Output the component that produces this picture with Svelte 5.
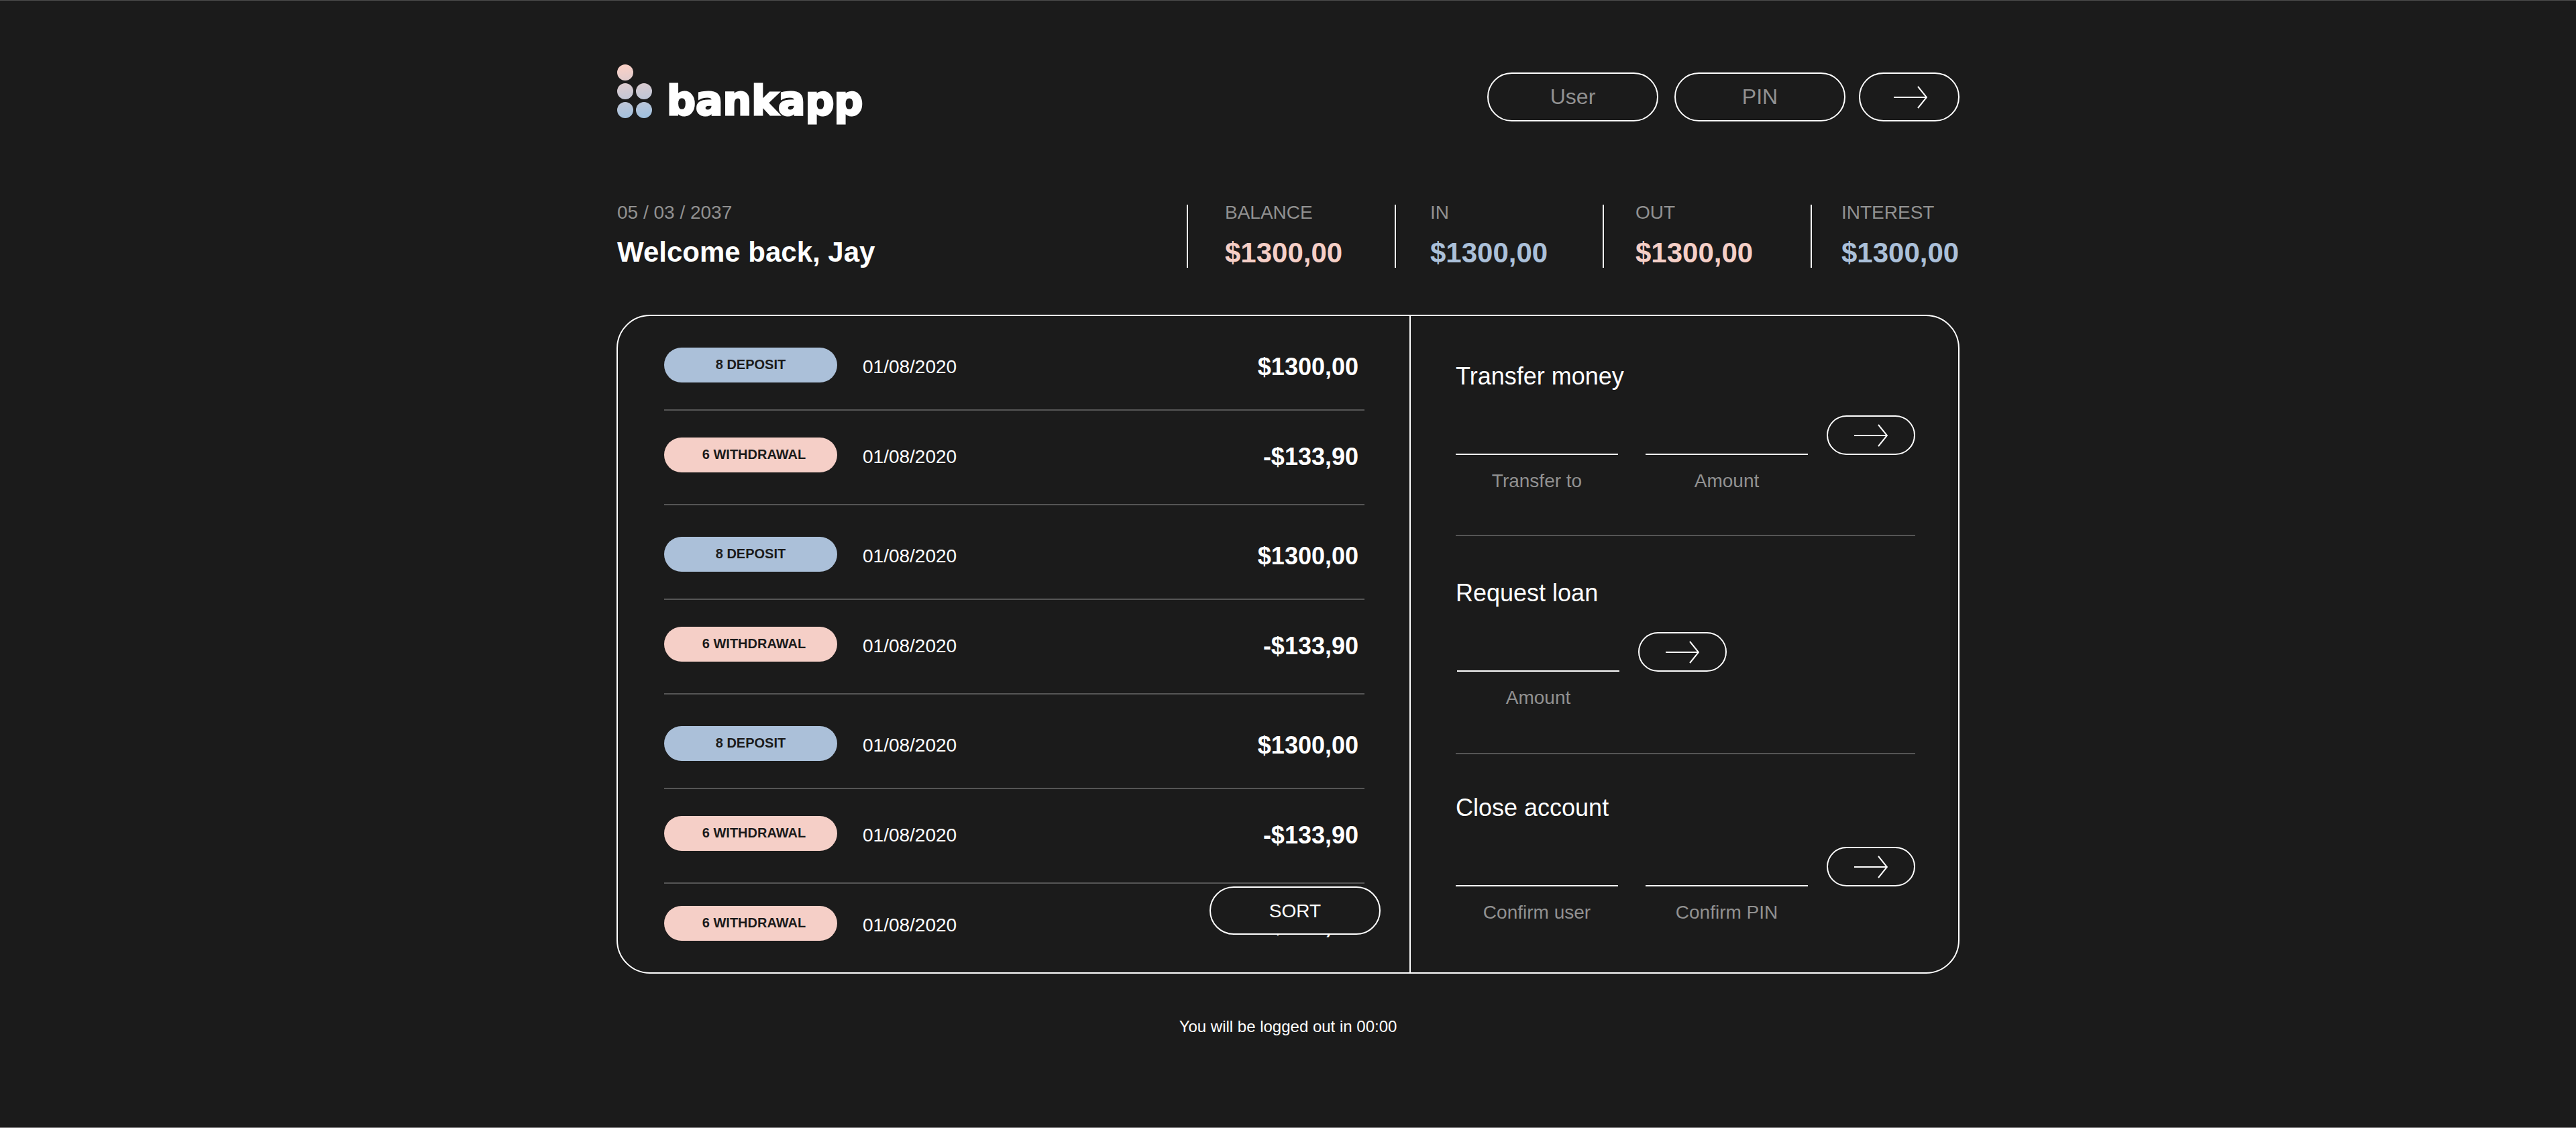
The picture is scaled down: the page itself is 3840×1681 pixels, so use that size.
<script>
  const stats = [
    { label: 'BALANCE', value: '$1300,00', tone: 'pink' },
    { label: 'IN', value: '$1300,00', tone: 'blue' },
    { label: 'OUT', value: '$1300,00', tone: 'pink' },
    { label: 'INTEREST', value: '$1300,00', tone: 'blue' }
  ];

  const deposit = { type: 'deposit', tag: '8 DEPOSIT', date: '01/08/2020', amount: '$1300,00' };
  const withdrawal = { type: 'withdrawal', tag: '6 WITHDRAWAL', date: '01/08/2020', amount: '-$133,90' };
  const movements = [deposit, withdrawal, deposit, withdrawal, deposit, withdrawal, withdrawal];

  const operations = [
    { id: 'transfer', title: 'Transfer money', fields: ['Transfer to', 'Amount'] },
    { id: 'loan', title: 'Request loan', fields: ['Amount'] },
    { id: 'close', title: 'Close account', fields: ['Confirm user', 'Confirm PIN'] }
  ];
</script>

{#snippet arrow()}
  <svg class="arrow" viewBox="0 0 50 34" aria-hidden="true">
    <path d="M0 17H49M36 1L49 17L36 33" />
  </svg>
{/snippet}

<div class="page">
  <div class="wrap">
    <header>
      <div class="brand">
        <svg class="dots" viewBox="0 0 52 80" aria-hidden="true">
          <defs>
            <linearGradient id="dots" gradientUnits="userSpaceOnUse" x1="20" y1="0" x2="32" y2="80">
              <stop offset="0" stop-color="#fad0c6" />
              <stop offset="1" stop-color="#a1c1df" />
            </linearGradient>
          </defs>
          <g fill="url(#dots)">
            <circle cx="12" cy="12" r="12" />
            <circle cx="12" cy="40" r="12" />
            <circle cx="40" cy="40" r="12" />
            <circle cx="12" cy="68" r="12" />
            <circle cx="40" cy="68" r="12" />
          </g>
        </svg>
        <span class="wordmark">bankapp</span>
      </div>
      <form class="login">
        <input class="pill" type="text" placeholder="User" aria-label="User" />
        <input class="pill" type="text" placeholder="PIN" aria-label="PIN" />
        <button class="go big" type="button" aria-label="Log in">{@render arrow()}</button>
      </form>
    </header>

    <section class="summary">
      <div class="welcome">
        <p class="caption">05 / 03 / 2037</p>
        <h1>Welcome back, Jay</h1>
      </div>
      <dl class="stats">
        {#each stats as s}
          <div class="stat">
            <dt class="caption">{s.label}</dt>
            <dd class={s.tone}>{s.value}</dd>
          </div>
        {/each}
      </dl>
    </section>

    <main class="panel">
      <section class="movements">
        <ul>
          {#each movements as m}
            <li class={m.type}>
              <span class="tag">{m.tag}</span>
              <time>{m.date}</time>
              <strong>{m.amount}</strong>
            </li>
          {/each}
        </ul>
        <button class="sort" type="button">SORT</button>
      </section>

      <div class="operations">
        {#each operations as op}
          <form class="operation {op.id}">
            <h2>{op.title}</h2>
            <div class="fields">
              {#each op.fields as f, i}
                <div class="field">
                  <input id="{op.id}-{i}" type="text" />
                  <label for="{op.id}-{i}">{f}</label>
                </div>
              {/each}
              <button class="go" type="button" aria-label={op.title}>{@render arrow()}</button>
            </div>
          </form>
        {/each}
      </div>
    </main>

    <footer>You will be logged out in 00:00</footer>
  </div>
</div>

<style>
  :global(body) {
    background: #1b1b1b;
  }

  .page,
  .page * {
    box-sizing: border-box;
  }

  .page {
    min-height: 100vh;
    padding: 95px 24px 0;
    border-top: 1px solid #4c4c4c;
    border-bottom: 1px solid #8a8788;
    background: #1b1b1b;
    color: #fff;
    font-family: 'Liberation Sans', Arial, sans-serif;
    font-size: 28px;
  }

  .wrap {
    max-width: 2002px;
    margin: 0 auto;
  }

  h1,
  h2,
  p,
  ul,
  dl,
  dd {
    margin: 0;
    padding: 0;
  }

  input,
  button {
    margin: 0;
    padding: 0;
    border: 2px solid #fff;
    border-radius: 0;
    background: #1b1b1b;
    color: #fff;
    font: inherit;
    text-align: center;
  }

  header {
    display: flex;
    justify-content: space-between;
    align-items: flex-start;
  }

  .brand {
    display: flex;
    gap: 22px;
    padding-left: 1px;
  }

  .dots {
    width: 52px;
    height: 80px;
  }

  .wordmark {
    padding-top: 24px;
    font-family: 'DejaVu Sans', Verdana, sans-serif;
    font-size: 60px;
    font-weight: 700;
    line-height: 60px;
    -webkit-text-stroke: 3px #fff;
  }

  .login {
    display: flex;
    gap: 24px;
    padding-top: 12px;
  }

  .pill {
    width: 255px;
    height: 73px;
    border-radius: 37px;
    font-size: 32px;
  }

  .pill::placeholder {
    color: #919191;
    opacity: 1;
  }

  .go {
    display: flex;
    align-items: center;
    justify-content: center;
    width: 132px;
    height: 59px;
    border-radius: 30px;
  }

  .go.big {
    width: 150px;
    height: 73px;
    margin-left: -4px;
    padding-left: 4px;
    border-radius: 37px;
  }

  .arrow {
    width: 50px;
    height: 34px;
    fill: none;
    stroke: #fff;
    stroke-width: 2;
  }

  .summary {
    display: flex;
    justify-content: space-between;
    margin-top: 124px;
  }

  .caption {
    color: #919191;
    font-size: 28px;
    line-height: 24px;
  }

  h1 {
    margin-top: 25px;
    font-size: 42px;
    line-height: 44px;
  }

  .stats {
    display: grid;
    grid-template-columns: 310px 310px 310px 222px;
  }

  .stat {
    padding-left: 55px;
    border-left: 2px solid #fff;
  }

  .stat:nth-child(2) {
    padding-left: 51px;
  }

  .stat:nth-child(3) {
    padding-left: 47px;
  }

  .stat:nth-child(4) {
    padding-left: 44px;
  }

  .stat dd {
    margin-top: 26px;
    font-size: 42px;
    font-weight: 700;
    line-height: 44px;
  }

  .pink {
    color: #f5cfc7;
  }

  .blue {
    color: #abc0d9;
  }

  .welcome {
    padding-left: 1px;
  }

  .panel {
    display: grid;
    grid-template-columns: minmax(0, 1fr) 816px;
    margin-top: 70px;
    border: 2px solid #fff;
    border-radius: 50px;
  }

  .movements {
    position: relative;
    padding: 0 67px 0 69px;
    border-right: 2px solid #fff;
  }

  ul {
    list-style: none;
  }

  li {
    display: flex;
    align-items: flex-start;
    height: 141px;
    padding: 47px 9px 0 0;
    border-bottom: 2px solid #555;
  }

  li.withdrawal {
    padding-top: 40px;
  }

  li:last-child {
    height: auto;
    padding-top: 33px;
    border-bottom: 0;
  }

  .tag {
    width: 258px;
    padding-bottom: 2px;
    border-radius: 26px;
    background: #abc0d9;
    color: #1b1b1b;
    font-size: 20px;
    font-weight: 700;
    line-height: 50px;
    text-align: center;
  }

  .withdrawal .tag {
    padding-left: 10px;
    background: #f5cfc7;
  }

  time {
    margin-left: 38px;
    line-height: 58px;
  }

  strong {
    margin-left: auto;
    font-size: 36px;
    line-height: 58px;
  }

  .sort {
    position: absolute;
    right: 43px;
    bottom: 56px;
    width: 255px;
    height: 72px;
    padding-top: 2px;
    border-radius: 36px;
  }

  .operations {
    padding: 0 64px 0 67px;
  }

  .operation {
    padding: 64px 0 66px;
    border-bottom: 2px solid #555;
  }

  .operation.transfer {
    padding: 69px 0 64px;
  }

  .operation.close {
    padding: 59px 0 73px;
    border-bottom: 0;
  }

  h2 {
    font-size: 36px;
    font-weight: 400;
    line-height: 42px;
  }

  .fields {
    display: flex;
    align-items: flex-start;
    margin-top: 37px;
  }

  .loan .fields {
    padding-left: 2px;
  }

  .field {
    display: flex;
    flex-direction: column;
    gap: 23px;
    width: 242px;
  }

  .field + .field {
    margin-left: 41px;
  }

  .field input {
    width: 100%;
    height: 59px;
    border-width: 0 0 2px;
  }

  .field label {
    color: #919191;
    line-height: 32px;
    text-align: center;
  }

  .fields .go {
    margin-left: 28px;
  }

  footer {
    margin-top: 65px;
    font-size: 24px;
    line-height: 28px;
    text-align: center;
  }
</style>
